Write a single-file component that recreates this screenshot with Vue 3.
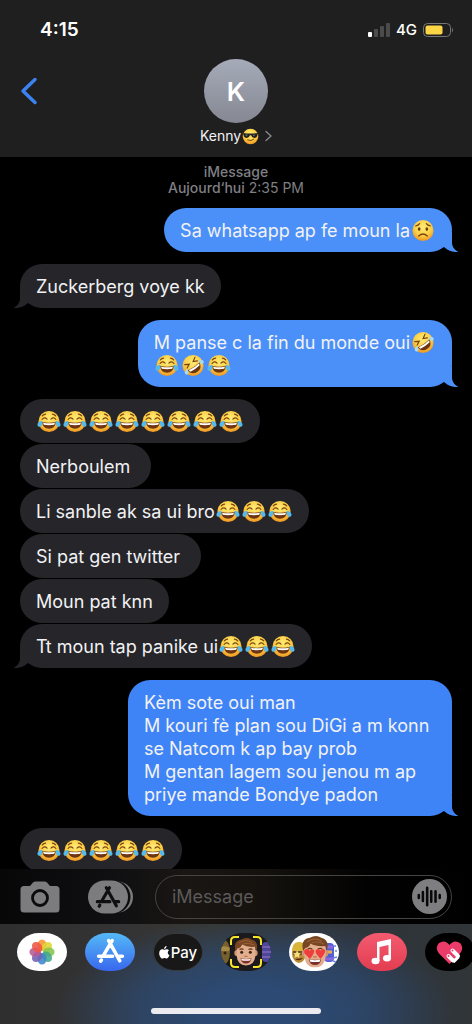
<template>
  <div class="phone">
    <!-- Shared emoji shapes -->
    <svg class="sprite" aria-hidden="true">
      <defs>
        <radialGradient id="skin" cx="50%" cy="35%" r="65%">
          <stop offset="0" stop-color="#ffec76" />
          <stop offset="0.6" stop-color="#fccf45" />
          <stop offset="1" stop-color="#ef9421" />
        </radialGradient>
        <symbol id="emoji-joy" viewBox="0 0 24 24">
          <circle cx="12" cy="12" r="11" fill="url(#skin)" />
          <path d="M4.8 12.6Q12 14 19.2 12.6Q18.6 19.6 12 19.6T4.8 12.6Z" fill="#6d3512" />
          <path d="M5.8 13.2Q12 14.4 18.2 13.2L17.5 15.5Q12 16.4 6.5 15.5Z" fill="#fff" />
          <path d="M4.8 9.9Q7.2 6.7 10 9.6M14 9.6Q16.8 6.7 19.2 9.9M5 6.2Q6.5 4.3 8.5 4.3M15.5 4.3Q17.5 4.3 19 6.2" fill="none" stroke="#7b430f" stroke-width="1.2" stroke-linecap="round" />
          <path d="M5.3 11.4C1.6 11.4 0 13.5 0 15.4C0 18.2 3.8 18.4 4.5 15.6ZM18.7 11.4C22.4 11.4 24 13.5 24 15.4C24 18.2 20.2 18.4 19.5 15.6Z" fill="#56b9ec" />
        </symbol>
        <symbol id="emoji-rofl" viewBox="0 0 24 24">
          <circle cx="12" cy="12" r="11" fill="url(#skin)" />
          <g transform="rotate(-35 12 12)">
            <path d="M4.5 13Q12 14.5 19.5 13Q18.5 20 12 20T4.5 13Z" fill="#6d3512" />
            <path d="M5.5 13.6Q12 15 18.5 13.6L17.8 15.8Q12 16.8 6.2 15.8Z" fill="#fff" />
            <path d="M5.5 6.2L9.5 8.7L5.5 10.7M18.5 6.2L14.5 8.7L18.5 10.7" fill="none" stroke="#7b430f" stroke-width="1.3" stroke-linecap="round" />
            <path d="M4.8 11.5C1.5 11.3 .2 13 .4 14.7C.8 17 3.8 16.8 4.3 14.5ZM19.2 11.5C22.5 11.3 23.8 13 23.6 14.7C23.2 17 20.2 16.8 19.7 14.5Z" fill="#a9d9ee" />
          </g>
        </symbol>
        <symbol id="emoji-worried" viewBox="0 0 24 24">
          <circle cx="12" cy="12" r="11" fill="url(#skin)" />
          <ellipse cx="8" cy="10.5" rx="1.4" ry="1.9" fill="#6b3b12" />
          <ellipse cx="16" cy="10.5" rx="1.4" ry="1.9" fill="#6b3b12" />
          <path d="M7.5 17.8Q12 13.5 16.5 17.8M4.5 7.2Q7 6.8 8.5 4.8M19.5 7.2Q17 6.8 15.5 4.8" fill="none" stroke="#7b430f" stroke-width="1.3" stroke-linecap="round" />
        </symbol>
        <symbol id="emoji-cool" viewBox="0 0 24 24">
          <circle cx="12" cy="12" r="11" fill="url(#skin)" />
          <path d="M1.5 7Q12 8.5 22.5 7L22 9.5Q20.8 14 17.3 14Q13.8 14 12.8 10.2H11.2Q10.2 14 6.7 14Q3.2 14 2 9.5Z" fill="#23211f" />
          <path d="M4.5 9.2L8.5 9.7L6 12Z" fill="#66717a" />
          <path d="M15 9.7L19 9.2L16.5 12Z" fill="#66717a" />
          <path d="M8 16.8Q13 19.5 16.5 16" fill="none" stroke="#7b430f" stroke-width="1.4" stroke-linecap="round" />
        </symbol>
        <symbol id="store-a" viewBox="0 0 28 26">
          <g fill="none" stroke-width="3.4" stroke-linecap="round">
            <path d="M15.6 2.5L6.8 17.5M12.2 2.5L23 22M2.5 17.5H16M21.5 17.5H25.5M5.2 21.2L4.5 22.4" />
          </g>
        </symbol>
        <symbol id="memoji" viewBox="0 0 26 30">
          <ellipse cx="3.5" cy="16" rx="2.2" ry="3" fill="#cf9273" />
          <ellipse cx="22.5" cy="16" rx="2.2" ry="3" fill="#cf9273" />
          <path d="M3.5 10Q3.5 3 13 3T22.5 10V18Q21.5 28.5 13 28.5T3.5 18Z" fill="#e3ae8d" />
          <path d="M2.5 14Q0 3.5 8.5 2.5Q14 -.8 18.5 2.5Q26 4 23.5 14L22 9.8Q14 10.5 9 7.5Q8 11 4.5 11.5Z" fill="#774522" />
          <path d="M6 6Q12 1.5 19 5.5M10 7Q15 5 21 8" fill="none" stroke="#9a6136" stroke-width="1" />
          <path d="M6.5 12.5Q8.5 11.3 10.5 12.5M15.5 12.5Q17.5 11.3 19.5 12.5" fill="none" stroke="#5b3219" stroke-width="1.1" />
          <circle cx="8.7" cy="15.2" r="1.5" fill="#38251a" />
          <circle cx="17.3" cy="15.2" r="1.5" fill="#38251a" />
          <path d="M11.5 19Q13 20 14.5 19" fill="none" stroke="#b77352" stroke-width="1.2" />
          <path d="M7.5 21.3Q13 22.5 18.5 21.3Q17.5 26.5 13 26.5T7.5 21.3Z" fill="#7b2f2b" />
          <path d="M8.2 21.7Q13 22.8 17.8 21.7L17.2 23.5Q13 24.2 8.8 23.5Z" fill="#fff" />
        </symbol>
      </defs>
    </svg>

    <header class="header">
      <div class="status">
        <time class="clock">4:15</time>
        <div class="status-right">
          <svg class="signal" viewBox="0 0 22 14" aria-hidden="true">
            <rect x="0" y="9" width="4" height="5" rx="1" fill="#fff" />
            <rect x="6" y="6" width="4" height="8" rx="1" fill="#4b4b4b" />
            <rect x="12" y="3" width="4" height="11" rx="1" fill="#4b4b4b" />
            <rect x="18" y="0" width="4" height="14" rx="1" fill="#4b4b4b" />
          </svg>
          <span class="network">4G</span>
          <svg class="battery" viewBox="0 0 31 14" aria-hidden="true">
            <rect x=".5" y=".5" width="27" height="13" rx="4" fill="none" stroke="#77777a" />
            <rect x="2.5" y="2.5" width="17" height="9" rx="2" fill="#fbd546" />
            <path d="M29 4.5Q31 7 29 9.5Z" fill="#77777a" />
          </svg>
        </div>
      </div>

      <div class="contact-bar">
        <button class="back" type="button" aria-label="Retour">
          <svg viewBox="0 0 18 28" aria-hidden="true">
            <path d="M15 2.5L3 14L15 25.5" fill="none" stroke="#3c83f2" stroke-width="3.5" stroke-linecap="round" stroke-linejoin="round" />
          </svg>
        </button>
        <button class="contact" type="button">
          <span class="avatar">K</span>
          <span class="contact-name">
            Kenny
            <svg class="name-emoji" role="img" aria-label="😎"><use href="#emoji-cool" /></svg>
            <svg class="name-chevron" viewBox="0 0 7 12" aria-hidden="true">
              <path d="M1 1.5L6 6L1 10.5" fill="none" stroke="#8a8a8e" stroke-width="1.3" stroke-linecap="round" />
            </svg>
          </span>
        </button>
      </div>
    </header>

    <main class="thread">
      <p class="stamp"><b>iMessage</b><br /><b>Aujourd‘hui</b> 2:35 PM</p>

      <div
        v-for="(group, g) in groups"
        :key="g"
        class="group"
        :class="[group.from, { deep: group.deep }]"
      >
        <div v-for="(message, m) in group.messages" :key="m" class="bubble">
          <template v-for="(part, p) in split(message)" :key="p">
            <svg v-if="emojis[part]" class="emoji" role="img" :aria-label="part">
              <use :href="emojis[part]" />
            </svg>
            <template v-else>{{ part }}</template>
          </template>
          <svg
            v-if="group.tail && m === group.messages.length - 1"
            class="tail"
            viewBox="0 0 21 20"
            aria-hidden="true"
          >
            <path d="M4 0H14V11C14.3 15 17 18.6 20.5 20C15.5 20.4 10.5 19 7 15.8L4 14Z" />
          </svg>
        </div>
      </div>
    </main>

    <footer class="footer">
      <form class="composer" @submit.prevent>
        <button class="tool" type="button" aria-label="Appareil photo">
          <svg class="camera" viewBox="0 0 40 32" aria-hidden="true">
            <path d="M4 5H10L13 1.5Q14 .5 15.5 .5H24.5Q26 .5 27 1.5L30 5H36Q39.5 5 39.5 8.5V28Q39.5 31.5 36 31.5H4Q.5 31.5 .5 28V8.5Q.5 5 4 5Z" fill="#7c7c7e" />
            <circle cx="20" cy="17" r="7.5" fill="none" stroke="#0b0b0d" stroke-width="2.8" />
          </svg>
        </button>
        <button class="tool" type="button" aria-label="Apps">
          <svg class="apps-toggle" viewBox="0 0 46 34" aria-hidden="true">
            <rect x="8" y="1.5" width="37" height="31" rx="15.5" fill="#7c7c7e" />
            <rect x="4" y=".5" width="38.5" height="33" rx="16.5" fill="#0d0d0f" />
            <rect x="0" y=".5" width="40" height="33" rx="16.5" fill="#7c7c7e" />
            <use href="#store-a" x="7" y="5" width="26" height="25" stroke="#0f0f10" />
          </svg>
        </button>
        <div class="field">
          <input v-model="draft" type="text" placeholder="iMessage" aria-label="iMessage" />
          <button class="voice" type="button" aria-label="Message audio">
            <svg viewBox="0 0 36 36" aria-hidden="true">
              <path d="M7 16.5V19.5M11.2 13.5V22.5M15.600 9V27M19.800 12.500V23.500M24.200 12.500V23.500M28.500 16.500V19.500" stroke="#080808" stroke-width="2.6" stroke-linecap="round" />
            </svg>
          </button>
        </div>
      </form>

      <nav class="apps" aria-label="Apps iMessage">
        <button class="app photos" type="button" aria-label="Photos">
          <svg viewBox="0 0 50 38" aria-hidden="true">
            <ellipse
              v-for="(color, i) in petals"
              :key="color"
              cx="25"
              cy="12.2"
              rx="4.6"
              ry="5.8"
              :fill="color"
              opacity="0.88"
              :transform="`rotate(${i * 45} 25 19)`"
            />
          </svg>
        </button>
        <button class="app store" type="button" aria-label="App Store">
          <svg viewBox="0 0 50 38" aria-hidden="true">
            <use href="#store-a" x="11" y="5" width="29" height="27" stroke="#fff" />
          </svg>
        </button>
        <button class="app pay" type="button" aria-label="Apple Pay">
          <svg class="apple" viewBox="0 0 12 14" aria-hidden="true">
            <path d="M8.3 0C8.4 1.7 7 3.2 5.6 3.2C5.4 1.6 6.8 .2 8.3 0ZM10.9 4.7C8.9 6 9.3 8.8 11.5 9.7C10.6 12 9.5 13.6 8.3 13.6C7.4 13.6 7 13.1 6 13.1S4.6 13.6 3.8 13.6C1.9 13.6 .2 10.2 .2 7.7C.2 5 1.9 3.5 3.6 3.5C4.6 3.5 5.3 4.1 6 4.1C6.7 4.1 7.5 3.4 8.7 3.4C9.5 3.4 10.3 3.9 10.9 4.7Z" fill="#fff" />
          </svg>
          <span>Pay</span>
        </button>
        <button class="app scan" type="button" aria-label="Memoji">
          <svg viewBox="0 0 50 38" aria-hidden="true">
            <ellipse cx="3" cy="19" rx="6" ry="12" fill="#76602e" />
            <path d="M0 14Q5 12 9 15L8 18H0Z" fill="#a58a45" />
            <circle cx="4" cy="20" r="1.5" fill="#30230f" />
            <rect x="41" y="9" width="10" height="20" rx="4" fill="#4c4897" />
            <path d="M41 14H50M41 19H50M41 24H50" stroke="#775caf" stroke-width="2" />
            <rect x="9" y="2" width="32" height="34" rx="5" fill="#1b191b" />
            <use href="#memoji" x="12" y="4" width="26" height="30" />
            <path d="M10 12V8Q10 4 14 4H18M32 4H36Q40 4 40 8V12M40 26V30Q40 34 36 34H32M18 34H14Q10 34 10 30V26" fill="none" stroke="#f5e52b" stroke-width="2" />
          </svg>
        </button>
        <button class="app stickers" type="button" aria-label="Autocollants Memoji">
          <svg viewBox="0 0 50 38" aria-hidden="true">
            <ellipse cx="10" cy="20" rx="7" ry="10" fill="#b88933" />
            <path d="M3 18Q3 9 10 9T17 18Z" fill="#d8b43b" />
            <path d="M4 18H16V22H4Z" fill="#73501f" />
            <path d="M8 17L9.5 20L12 20.3L10 22L10.5 25L8 23.5L5.5 25L6 22L4 20.3L7 20Z" fill="#f5df7b" />
            <path d="M6 26Q10 29 14 25" fill="#572b18" />
            <rect x="35" y="10" width="10" height="19" rx="4" fill="#5061cf" />
            <path d="M36 14H44M36 26H44" stroke="#8d68df" stroke-width="3" />
            <path d="M37 19H43" stroke="#e8ad54" stroke-width="3" />
            <path d="M45 13H47M46 18H48M44 25L48 24M44 28L47 29" stroke="#6882ed" stroke-width="1.5" />
            <use href="#memoji" x="11" y="2" width="30" height="34" />
            <path d="M21 26L15.5 20.5Q14 16.5 17.5 16Q19.5 15.8 20.5 18Q22 15.5 24.5 16.5Q27 18.5 21 26ZM31.5 26L27 20.5Q25.5 17 28.5 16Q30.5 15.8 31.5 18Q33 15.2 35.5 16.5Q38 18.5 31.5 26Z" fill="#f03e3d" />
          </svg>
        </button>
        <button class="app music" type="button" aria-label="Musique">
          <svg viewBox="0 0 50 38" aria-hidden="true">
            <path d="M20 9L34 6V25H31.5V12L22.5 14V28H20Z" fill="#fff" />
            <ellipse cx="18.5" cy="28" rx="4" ry="3.2" fill="#fff" />
            <ellipse cx="30" cy="25.3" rx="4" ry="3.2" fill="#fff" />
          </svg>
        </button>
        <button class="app touch" type="button" aria-label="Digital Touch">
          <svg viewBox="0 0 50 38" aria-hidden="true">
            <path d="M24.5 31L14 20.5Q9.5 14.5 14 10Q20 6 24.5 12Q29 6 35 10Q39.5 14.5 35 20.5Z" fill="#ea3b69" />
            <path d="M23.5 23L28 27.5M27.5 17.5L33 23" stroke="#fff" stroke-width="4" stroke-linecap="round" />
            <path d="M27 28L29.5 30L34.5 25L33 22Z" fill="#fff" />
            <circle cx="23.5" cy="23" r="1" fill="#ea3b69" />
            <circle cx="27.5" cy="17.5" r="1" fill="#ea3b69" />
          </svg>
        </button>
      </nav>
      <div class="home-bar"></div>
    </footer>
  </div>
</template>

<script setup>
import { ref } from 'vue'

const draft = ref('')

const emojis = {
  '😂': '#emoji-joy',
  '🤣': '#emoji-rofl',
  '😟': '#emoji-worried'
}

const petals = ['#f79433', '#dfd636', '#85c44f', '#42a98c', '#3f86c9', '#7461b2', '#b85a95', '#ee5546']

const groups = [
  { from: 'me', tail: true, messages: ['Sa whatsapp ap fe moun la😟'] },
  { from: 'them', tail: true, messages: ['Zuckerberg voye kk'] },
  { from: 'me', tail: true, messages: ['M panse c la fin du monde oui🤣\n😂🤣😂'] },
  {
    from: 'them',
    tail: true,
    messages: [
      '😂😂😂😂😂😂😂😂',
      'Nerboulem ',
      'Li sanble ak sa ui bro😂😂😂',
      'Si pat gen twitter ',
      'Moun pat knn',
      'Tt moun tap panike ui😂😂😂'
    ]
  },
  {
    from: 'me',
    tail: true,
    deep: true,
    messages: ['Kèm sote oui man\nM kouri fè plan sou DiGi a m konn se Natcom k ap bay prob\nM gentan lagem sou jenou m ap priye mande Bondye padon']
  },
  { from: 'them', tail: false, messages: ['😂😂😂😂😂'] }
]

// Break a message into runs of text and single emojis
const split = (message) => message.split(/(😂|🤣|😟)/u).filter(Boolean)
</script>

<style>
body {
  margin: 0;
  background: #000;
}
</style>

<style scoped>
.phone {
  display: flex;
  flex-direction: column;
  height: 100vh;
  overflow: hidden;
  background: #000;
  color: #f2f2f4;
  font-family: Inter, 'Liberation Sans', sans-serif;
}

.sprite {
  position: absolute;
  width: 0;
  height: 0;
}

svg {
  display: block;
}

button {
  padding: 0;
  border: 0;
  background: none;
  color: inherit;
  font: inherit;
  cursor: pointer;
}

/* Header */
.header {
  flex: none;
  background: #1f1f1f;
}

.status {
  display: flex;
  align-items: center;
  justify-content: space-between;
  height: 59px;
  padding: 0 18px 0 40px;
}

.clock {
  font-size: 19px;
  font-weight: 600;
  color: #fff;
}

.status-right {
  display: flex;
  align-items: center;
  gap: 6px;
}

.signal {
  width: 22px;
  height: 14px;
}

.network {
  font-size: 15px;
  font-weight: 500;
  color: #fff;
}

.battery {
  width: 31px;
  height: 14px;
}

.contact-bar {
  display: grid;
  grid-template-columns: 1fr auto 1fr;
  align-items: start;
  padding: 0 20px 12px;
}

.back {
  display: flex;
  align-items: center;
  justify-self: start;
  height: 64px;
}

.back svg {
  width: 18px;
  height: 28px;
}

.contact {
  display: flex;
  flex-direction: column;
  align-items: center;
  gap: 4px;
}

.avatar {
  display: flex;
  align-items: center;
  justify-content: center;
  width: 64px;
  height: 64px;
  border-radius: 50%;
  background: linear-gradient(#a6abb9, #858892);
  color: #fff;
  font-size: 26px;
  font-weight: 600;
}

.contact-name {
  display: flex;
  align-items: center;
  font-size: 14px;
  line-height: 18px;
}

.name-emoji {
  width: 17px;
  height: 17px;
  margin: 0 6px 0 1px;
}

.name-chevron {
  width: 7px;
  height: 12px;
}

/* Conversation */
.thread {
  flex: 1;
  min-height: 0;
  display: flex;
  flex-direction: column;
  gap: 12px;
  padding: 7px 20px 0;
  overflow-y: auto;
  scrollbar-width: none;
}

.stamp {
  flex: none;
  margin: 0;
  color: #7f7f84;
  font-size: 14px;
  line-height: 16px;
  text-align: center;
}

.stamp b {
  font-weight: 500;
}

.group {
  --bubble: #26262a;
  flex: none;
  display: flex;
  flex-direction: column;
  align-items: flex-start;
  gap: 1px;
}

.group.me {
  --bubble: #4b90f8;
  align-items: flex-end;
}

.group.deep {
  --bubble: #3f84f7;
}

.bubble {
  position: relative;
  box-sizing: border-box;
  max-width: 75%;
  padding: 11px 16px 10px;
  border-radius: 22px;
  background: var(--bubble);
  font-size: 18px;
  line-height: 23px;
  white-space: pre-wrap;
}

.emoji {
  display: inline-block;
  width: 24px;
  height: 23px;
  margin: 0 1px;
  vertical-align: top;
}

.tail {
  position: absolute;
  bottom: 0;
  left: -7px;
  width: 21px;
  height: 20px;
  fill: var(--bubble);
  transform: scaleX(-1);
}

.me .tail {
  right: -7px;
  left: auto;
  transform: none;
}

/* Composer */
.footer {
  flex: none;
  background:
    radial-gradient(ellipse 42% 96px at 54% 92%, #2c4a74 25%, rgba(44, 74, 116, 0.7) 60%, transparent),
    linear-gradient(90deg, #2f2f2f, #343434 30%, #37362f 45%, #2f343a 75%, #303538);
}

.composer {
  display: flex;
  align-items: center;
  height: 55px;
  padding: 0 20px;
  background: linear-gradient(90deg, #070708, #101012 25%, #1a1613 40%, #15120e 55%, #020202 78%, #000);
}

.camera {
  width: 40px;
  height: 32px;
}

.tool + .tool {
  margin-left: 28px;
}

.apps-toggle {
  width: 46px;
  height: 34px;
}

.field {
  flex: 1;
  min-width: 0;
  display: flex;
  align-items: center;
  box-sizing: border-box;
  height: 44px;
  margin-left: 21px;
  padding: 0 4px 0 16px;
  border: 1px solid #454443;
  border-radius: 22px;
}

.field input {
  flex: 1;
  min-width: 0;
  padding: 0;
  border: 0;
  outline: 0;
  background: none;
  color: #f2f2f4;
  font: inherit;
  font-size: 18px;
}

.field input::placeholder {
  color: #5b5a59;
  opacity: 1;
}

.voice {
  flex: none;
  width: 35px;
  height: 35px;
  border-radius: 50%;
  background: #7e7e80;
}

/* App strip */
.apps {
  display: flex;
  gap: 18px;
  box-sizing: border-box;
  height: 84px;
  padding: 9px 0 0 17px;
  overflow: hidden;
}

.app {
  flex: none;
  display: flex;
  align-items: center;
  justify-content: center;
  width: 50px;
  height: 38px;
  border-radius: 22px / 19px;
  overflow: hidden;
}

.app > svg:not(.apple) {
  width: 50px;
  height: 38px;
}

.photos,
.stickers {
  background: #fff;
}

.store {
  background: linear-gradient(#54b9f6, #3967ee);
}

.pay {
  gap: 1px;
  box-sizing: border-box;
  border: 1px solid #3a3a3b;
  background: #191818;
  color: #fff;
  font-size: 15px;
  font-weight: 500;
}

.apple {
  width: 11px;
  height: 13px;
}

.scan {
  background: #1b191b;
}

.music {
  background: linear-gradient(#f45b70, #e23d50);
}

.touch {
  background: #000;
}

.home-bar {
  width: 36%;
  height: 6px;
  margin: 0 auto 10px;
  border-radius: 3px;
  background: #ececf0;
}
</style>
